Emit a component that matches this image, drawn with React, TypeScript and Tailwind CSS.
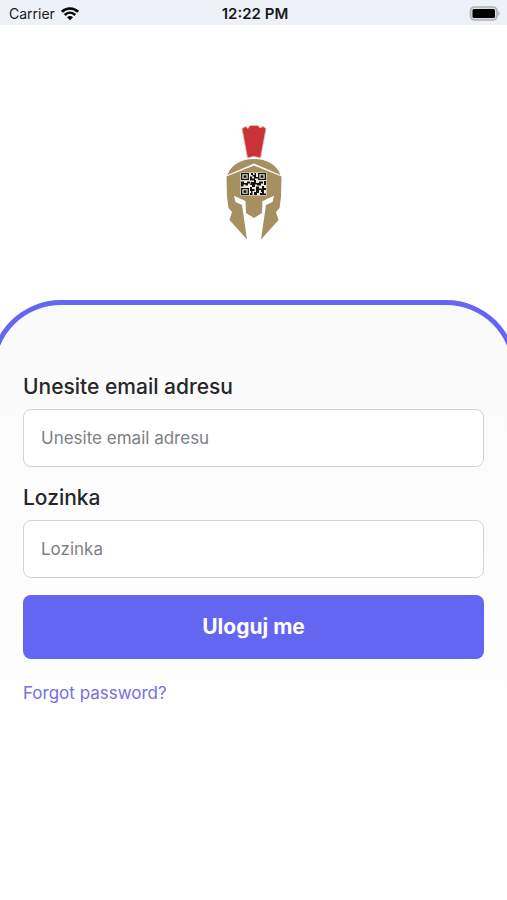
import type { InputHTMLAttributes } from "react";

export default function App() {
  return (
    <div className="flex min-h-screen flex-col overflow-hidden bg-white font-['Inter',sans-serif]">
      <StatusBar />

      <header className="flex justify-center pt-[99px] pb-[59px]">
        <SpartanLogo />
      </header>

      <main className="-mx-2.5 flex-1 rounded-t-[71px] border-x-[5px] border-t-[5px] border-[#6366f1] bg-linear-to-b from-[#fafafa] to-white to-80% px-7 pt-[68px]">
        <form onSubmit={(e) => e.preventDefault()}>
          <Field id="email" type="email" label="Unesite email adresu" />
          <Field id="password" type="password" label="Lozinka" />

          <button
            type="submit"
            className="block h-16 w-full rounded-lg bg-[#6366f1] text-[21px] font-bold text-white"
          >
            Uloguj me
          </button>
        </form>

        <a href="#forgot" className="mt-[22px] inline-block text-[17px] leading-6 text-[#7370e0]">
          Forgot password?
        </a>
      </main>
    </div>
  );
}

function StatusBar() {
  return (
    <div className="grid h-[25px] grid-cols-3 items-center bg-[#eef1f8] pt-0.5 pr-1.5 pl-[9px] text-[14px] leading-5 text-[#18181b]">
      <div className="flex items-center gap-1.5">
        <span>Carrier</span>
        <WifiIcon />
      </div>
      <span className="text-center text-[15px] font-semibold">12:22 PM</span>
      <div className="flex justify-end">
        <BatteryIcon />
      </div>
    </div>
  );
}

interface FieldProps extends InputHTMLAttributes<HTMLInputElement> {
  id: string;
  label: string;
}

function Field({ id, label, ...rest }: FieldProps) {
  return (
    <div className="mb-[17px]">
      <label htmlFor={id} className="mb-2 block text-[21px] leading-7 font-medium text-[#27272a]">
        {label}
      </label>
      <input
        id={id}
        placeholder={label}
        className="block h-[58px] w-full rounded-lg border border-[#d4d4d8] bg-white px-[17px] text-[17px] text-[#27272a] placeholder:text-[#7d8086] outline-none"
        {...rest}
      />
    </div>
  );
}

function WifiIcon() {
  return (
    <svg width="18" height="14" viewBox="0 0 18 14" aria-hidden="true">
      <g fill="none" stroke="#050505" strokeWidth="2.6">
        <path d="M0.9 4.8C5.4 0.3 12.6 0.3 17.1 4.8" />
        <path d="M3.7 8C6.8 5 11.2 5 14.3 8" />
      </g>
      <path d="M6 10.2C7.8 8.7 10.2 8.7 12 10.2L9 13.3Z" fill="#050505" />
    </svg>
  );
}

function BatteryIcon() {
  return (
    <svg width="32" height="15" viewBox="0 0 32 15" aria-hidden="true">
      <rect x="1.500" y="1" width="26.500" height="13" rx="4" fill="#d9dbe0" stroke="#aeb0b5" strokeWidth="1.6" />
      <rect x="3.500" y="3" width="22.500" height="9" rx="1.500" fill="#000" />
      <path d="M29.2 5.2C31.2 5.8 31.2 9.2 29.2 9.8Z" fill="#aeb0b5" />
    </svg>
  );
}

// top-left corners of the three QR finder squares
const QR_FINDERS = [
  [0, 0],
  [17, 0],
  [0, 15],
];

function SpartanLogo() {
  return (
    <svg width="58" height="117" viewBox="0 0 58 117" role="img" aria-label="Spartan helmet">
      <path
        d="M17 4.5L20.5 2.5L23 4.5L25 1.5H33L35 4L38 2.5L41 4.5L35.5 34Q29 31 22.5 34Z"
        fill="#c93236"
        stroke="#eeb5b3"
        strokeWidth="0.8"
      />
      <path d="M2.500 51C6 41 16 35 29 35C42 35 52 41 55.500 51L29 39.500Z" fill="#a68f60" />
      <path
        d="M1.500 52.500L29 41.500L56.500 52.500L56 73L54.500 84L51 88L53.500 96L36 115.500L41 81L47.500 78L49 71.700L37.500 77L37 89L29 94L21 89L20.500 77L9 71.700L10.500 78L17 81L22 115.500L4.500 96L7 88L3.500 84L2 73Z"
        fill="#a68f60"
      />
      <g transform="translate(16 49)">
        <rect x="-0.500" y="-0.500" width="26" height="23" fill="#eeebe5" />
        {QR_FINDERS.map(([x, y]) => (
          <g key={`${x}-${y}`} transform={`translate(${x} ${y})`}>
            <rect x="0.700" y="0.600" width="6.600" height="5.800" fill="none" stroke="#16130f" strokeWidth="1.300" />
            <rect x="2.500" y="2.300" width="3" height="2.500" fill="#16130f" />
          </g>
        ))}
        <path
          d="M10 0h2v2h-2zM13.500 0h1.500v4h2v1.500h-4v-2h-1.500v-1.500h2zM9 3.500h2v2h3v2h-5zM0 8.500h3v1.500h3v-1.500h3v2h-2v2h-2.500v-1h-2v2h-2.500zM10 9h3v-2h2v3h3v-1.500h4v2h-2v2h-4v-1h-2v2.500h-3v-2h-2zM23 8h2v4h-2zM9 14h2v2h2.500v2h-2v4h-2.500v-2h1v-2h-1zM13 19h3v3h-3zM15 13.500h3v2h3v-2.500h2v2h2v2h-2v2h-3v-2h-2v3h-3zM19 20h2v-1h2v1.500h2v1.500h-6z"
          fill="#16130f"
        />
      </g>
    </svg>
  );
}
